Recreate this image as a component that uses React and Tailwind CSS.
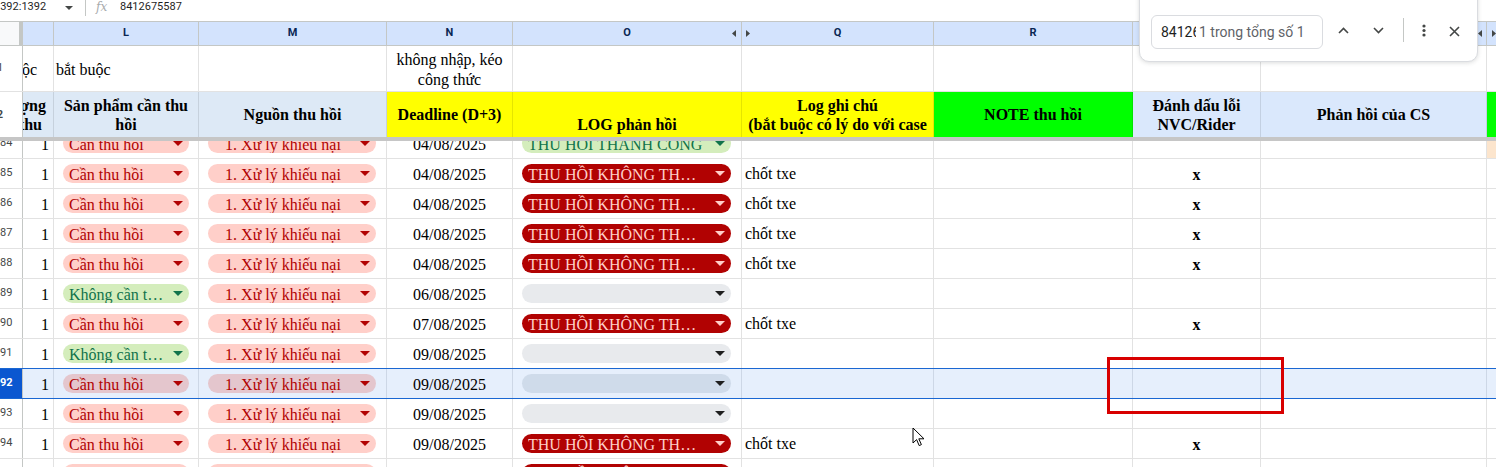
import clsx from "clsx";

const SERIF = "font-['Liberation_Serif','Times_New_Roman',serif]";
const SANS = "font-['Roboto','Liberation_Sans',sans-serif]";
const GRID = "border-[#e2e2e2]";
const HEAD = "border-[#c4c7c5]";

const chipStyles = {
  can: { bg: "bg-[#ffcfc9]", text: "text-[#b10202]", arrow: "#b10202", label: "Cần thu hồi" },
  khong: { bg: "bg-[#d4edbc]", text: "text-[#11734b]", arrow: "#11734b", label: "Không cần thu hồi" },
  src: { bg: "bg-[#ffcfc9]", text: "text-[#b10202]", arrow: "#b10202", label: "1. Xử lý khiếu nại" },
  ok: { bg: "bg-[#d4edbc]", text: "text-[#11734b]", arrow: "#11734b", label: "THU HOI THANH CONG" },
  fail: { bg: "bg-[#b10202]", text: "text-[#ffcfc9]", arrow: "#ffcfc9", label: "THU HỒI KHÔNG THÀNH CÔNG" },
  empty: { bg: "bg-[#e8eaed]", text: "text-[#1f1f1f]", arrow: "#1f1f1f", label: "" },
};

const selectedChipBg = {
  can: "bg-[#e4c6cd]",
  src: "bg-[#e4c6cd]",
  empty: "bg-[#cfdbea]",
};

const rows = [
  { n: 1384, l: "can", o: "ok", date: "04/08/2025", clip: true, edge: true },
  { n: 1385, l: "can", o: "fail", date: "04/08/2025", note: true },
  { n: 1386, l: "can", o: "fail", date: "04/08/2025", note: true },
  { n: 1387, l: "can", o: "fail", date: "04/08/2025", note: true },
  { n: 1388, l: "can", o: "fail", date: "04/08/2025", note: true },
  { n: 1389, l: "khong", o: "empty", date: "06/08/2025" },
  { n: 1390, l: "can", o: "fail", date: "07/08/2025", note: true },
  { n: 1391, l: "khong", o: "empty", date: "09/08/2025", blueBottom: true },
  { n: 1392, l: "can", o: "empty", date: "09/08/2025", selected: true },
  { n: 1393, l: "can", o: "empty", date: "09/08/2025" },
  { n: 1394, l: "can", o: "fail", date: "09/08/2025", note: true },
  { n: 1395, l: "can", o: "fail", date: "09/08/2025" },
];

function Arrow({ color }) {
  return (
    <svg width="10" height="5" viewBox="0 0 10 5" className="ml-[8px] shrink-0">
      <path d="M0 0h10L5 5z" fill={color} />
    </svg>
  );
}

function Chip({ kind, center, selected }) {
  const s = chipStyles[kind];
  return (
    <div
      className={clsx(
        "flex h-[19px] w-full items-center rounded-full pl-[6px] pr-[6px]",
        selected && selectedChipBg[kind] ? selectedChipBg[kind] : s.bg
      )}
    >
      <span
        className={clsx(
          "h-[19px] min-w-0 flex-1 truncate whitespace-nowrap pt-[1px] text-[16px] leading-[19px]",
          s.text,
          center && "text-center"
        )}
      >
        {s.label}
      </span>
      <Arrow color={s.arrow} />
    </div>
  );
}

function RowNum({ n, selected }) {
  return (
    <div
      className={clsx(
        "h-full w-[23px] shrink-0 overflow-hidden border-r",
        HEAD,
        SANS,
        selected ? "bg-[#0b57d0] font-bold text-white" : "bg-white text-[#444746]"
      )}
    >
      <div className="-ml-[20px] flex h-full w-[40px] items-center justify-center text-[11px]">{n}</div>
    </div>
  );
}

function DataRow({ r }) {
  const cell = clsx("h-full shrink-0 border-r", r.selected ? "border-[#cdd7e6]" : GRID);
  return (
    <div
      className={clsx(
        "overflow-hidden border-b",
        r.clip ? "h-[18px]" : "h-[30px]",
        r.selected || r.blueBottom ? "border-[#1a67d2]" : GRID,
        r.selected ? "bg-[#e6effc]" : "bg-white"
      )}
    >
      <div className={clsx("flex h-[29px]", r.clip && "-mt-[12px]")}>
        <RowNum n={r.n} selected={r.selected} />
        <div className={clsx(cell, "flex w-[31px] items-center justify-end pr-[4px] pt-[3px] text-[16px]")}>1</div>
        <div className={clsx(cell, "flex w-[145px] items-center px-[9px]")}>
          <Chip kind={r.l} selected={r.selected} />
        </div>
        <div className={clsx(cell, "flex w-[188px] items-center pl-[9px] pr-[10px]")}>
          <Chip kind="src" center selected={r.selected} />
        </div>
        <div className={clsx(cell, "flex w-[126px] items-center justify-center pt-[3px] text-[16px]")}>{r.date}</div>
        <div className={clsx(cell, "flex w-[229px] items-center pl-[9px] pr-[10px]")}>
          <Chip kind={r.o} selected={r.selected} />
        </div>
        <div className={clsx(cell, "flex w-[192px] items-center pl-[3px] pt-[1px] text-[16px]")}>{r.note ? "chốt txe" : ""}</div>
        <div className={clsx(cell, "w-[199px]")} />
        <div className={clsx(cell, "flex w-[128px] items-center justify-center pt-[3px] text-[16px] font-bold")}>
          {r.note ? "x" : ""}
        </div>
        <div className={clsx(cell, "w-[226px]")} />
        <div className={clsx("h-full flex-1", r.edge ? "bg-[#fce5cd]" : "")} />
      </div>
    </div>
  );
}

function HiddenLeft() {
  return (
    <svg width="4" height="7" viewBox="0 0 4 7">
      <path d="M4 0v7L0 3.5z" fill="#444746" />
    </svg>
  );
}

function HiddenRight() {
  return (
    <svg width="4" height="7" viewBox="0 0 4 7">
      <path d="M0 0v7l4-3.5z" fill="#444746" />
    </svg>
  );
}

function ColLetter({ w, label, className, children }) {
  return (
    <div className={clsx("relative flex h-full shrink-0 items-center justify-center border-r", HEAD, w, className)}>
      {label}
      {children}
    </div>
  );
}

function FindBar() {
  return (
    <div
      className={clsx(
        "absolute left-[1139px] top-[-10px] h-[72px] w-[339px] rounded-b-[10px] border border-[#dadce0] bg-white pl-[11px] pt-[24px] shadow-[0_1px_4px_rgba(60,64,67,0.18)]",
        SANS
      )}
    >
      <div className="flex h-[34px] items-center">
        <div className="flex h-[34px] w-[172px] items-center rounded-[6px] border border-[#dadce0] pl-[9px] text-[14px]">
          <span className="w-[35px] overflow-hidden whitespace-nowrap text-[#1f1f1f]">8412675587</span>
          <span className="ml-[3px] whitespace-nowrap text-[#5f6368]">1 trong tổng số 1</span>
        </div>
        <svg width="11" height="7" viewBox="0 0 11 7" className="ml-[15px] -mt-[3px]">
          <path d="M1 6l4.5-4.5L10 6" stroke="#444746" strokeWidth="1.6" fill="none" />
        </svg>
        <svg width="11" height="7" viewBox="0 0 11 7" className="ml-[24px] -mt-[3px]">
          <path d="M1 1l4.5 4.5L10 1" stroke="#444746" strokeWidth="1.6" fill="none" />
        </svg>
        <div className="ml-[19px] -mt-[4px] h-[24px] w-px bg-[#c4c7c5]" />
        <svg width="4" height="13" viewBox="0 0 4 13" className="ml-[18px] -mt-[3px]">
          <circle cx="2" cy="2" r="1.6" fill="#444746" />
          <circle cx="2" cy="6.5" r="1.6" fill="#444746" />
          <circle cx="2" cy="11" r="1.6" fill="#444746" />
        </svg>
        <svg width="11" height="11" viewBox="0 0 11 11" className="ml-[23px] -mt-[1px]">
          <path d="M1 1l9 9M10 1l-9 9" stroke="#444746" strokeWidth="1.6" fill="none" />
        </svg>
      </div>
    </div>
  );
}

export default function App() {
  return (
    <div className={clsx("relative h-[467px] w-[1496px] overflow-hidden bg-white text-[#000]", SERIF)}>
      {/* formula bar */}
      <div className={clsx("flex h-[22px] items-start border-b bg-white text-[11px] leading-[14px] text-[#1f1f1f]", HEAD, SANS)}>
        <div className="w-[64px] overflow-hidden whitespace-nowrap">
          <div className="-ml-[6px]">1392:1392</div>
        </div>
        <svg width="8" height="4" viewBox="0 0 8 4" className="ml-[1px] mt-[6px]">
          <path d="M0 0h8L4 4z" fill="#444746" />
        </svg>
        <div className="ml-[12px] h-[16px] w-px bg-[#c4c7c5]" />
        <div className="w-[34px] pl-[10px] font-['DejaVu_Serif',serif] text-[12px] italic text-[#a8abad]">fx</div>
        <div>8412675587</div>
      </div>

      {/* column letters */}
      <div className={clsx("flex h-[24px] border-b bg-[#d3e3fd] text-[11px] font-bold text-[#0a2754]", HEAD, SANS)}>
        <div className="h-full w-[23px] shrink-0 border-r-[4px] border-[#c4c7c5] bg-[#f8f9fa]" />
        <ColLetter w="w-[31px]" label="" />
        <ColLetter w="w-[145px]" label="L" />
        <ColLetter w="w-[188px]" label="M" />
        <ColLetter w="w-[126px]" label="N" />
        <ColLetter w="w-[229px]" label="O">
          <div className="absolute right-[5px] top-[8px]">
            <HiddenLeft />
          </div>
        </ColLetter>
        <ColLetter w="w-[192px]" label="Q">
          <div className="absolute left-[4px] top-[8px]">
            <HiddenRight />
          </div>
        </ColLetter>
        <ColLetter w="w-[199px]" label="R" />
        <ColLetter w="w-[128px]" label="S" />
        <ColLetter w="w-[226px]" label="T">
          <div className="absolute right-[4px] top-[8px]">
            <HiddenLeft />
          </div>
        </ColLetter>
        <div className="flex h-full flex-1 items-center pl-[5px]">
          <HiddenRight />
        </div>
      </div>

      {/* row 1 */}
      <div className={clsx("flex h-[46px] border-b text-[16px]", GRID)}>
        <RowNum n={1} />
        <div className={clsx("flex h-full w-[31px] shrink-0 items-center justify-end overflow-hidden whitespace-nowrap border-r pr-[16px] pt-[3px]", GRID)}>
          Bắt buộc
        </div>
        <div className={clsx("flex h-full w-[145px] shrink-0 items-center border-r pl-[2px] pt-[3px]", GRID)}>bắt buộc</div>
        <div className={clsx("h-full w-[188px] shrink-0 border-r", GRID)} />
        <div className={clsx("flex h-full w-[126px] shrink-0 items-center justify-center border-r pt-[3px] text-center leading-[20px]", GRID)}>
          không nhập, kéo
          <br />
          công thức
        </div>
        <div className={clsx("h-full w-[229px] shrink-0 border-r", GRID)} />
        <div className={clsx("h-full w-[192px] shrink-0 border-r", GRID)} />
        <div className={clsx("h-full w-[199px] shrink-0 border-r", GRID)} />
        <div className={clsx("h-full w-[128px] shrink-0 border-r", GRID)} />
        <div className={clsx("h-full w-[226px] shrink-0 border-r", GRID)} />
        <div className="h-full flex-1" />
      </div>

      {/* row 2: headers */}
      <div className="flex h-[45px] text-[16px] font-bold leading-[19px]">
        <RowNum n={2} />
        <div className="flex h-full w-[31px] shrink-0 flex-col items-end justify-center overflow-hidden whitespace-nowrap border-r border-black/10 bg-[#dde9f6]">
          <div className="pr-[7px]">Số lượng</div>
          <div className="pr-[11px]">thu</div>
        </div>
        <div className="flex h-full w-[145px] shrink-0 items-center justify-center border-r border-black/10 bg-[#dde9f6] text-center">
          Sản phẩm cần thu
          <br />
          hồi
        </div>
        <div className="flex h-full w-[188px] shrink-0 items-center justify-center border-r border-black/10 bg-[#dde9f6]">
          Nguồn thu hồi
        </div>
        <div className="flex h-full w-[126px] shrink-0 items-center justify-center border-r border-black/10 bg-[#ffff00]">
          Deadline (D+3)
        </div>
        <div className="flex h-full w-[229px] shrink-0 items-end justify-center border-r border-black/10 bg-[#ffff00] pb-[3px]">
          LOG phản hồi
        </div>
        <div className="flex h-full w-[192px] shrink-0 flex-col items-center justify-center overflow-hidden whitespace-nowrap border-r border-black/10 bg-[#ffff00]">
          <div>Log ghi chú</div>
          <div>(bắt buộc có lý do với case</div>
        </div>
        <div className="flex h-full w-[199px] shrink-0 items-center justify-center border-r border-black/10 bg-[#00ff00]">
          NOTE thu hồi
        </div>
        <div className="flex h-full w-[128px] shrink-0 items-center justify-center border-r border-black/10 bg-[#dae8fc] text-center">
          Đánh dấu lỗi
          <br />
          NVC/Rider
        </div>
        <div className="flex h-full w-[226px] shrink-0 items-center justify-center border-r border-black/10 bg-[#dae8fc]">
          Phản hồi của CS
        </div>
        <div className="h-full flex-1 bg-[#00ff00]" />
      </div>

      {/* freeze line */}
      <div className="h-[4px] bg-[#c6c6c6]" />

      {rows.map((r) => (
        <DataRow key={r.n} r={r} />
      ))}

      {/* annotation box */}
      <div className="absolute left-[1107px] top-[357px] h-[57px] w-[177px] border-[3px] border-[#d80000]" />

      {/* mouse pointer */}
      <svg width="14" height="20" viewBox="0 0 14 20" className="absolute left-[912px] top-[427px]">
        <path d="M1 1v15l3.6-3.4 2.6 6 2.2-1-2.6-5.8H12z" fill="#fff" stroke="#000" strokeWidth="1" />
      </svg>

      <FindBar />
    </div>
  );
}
